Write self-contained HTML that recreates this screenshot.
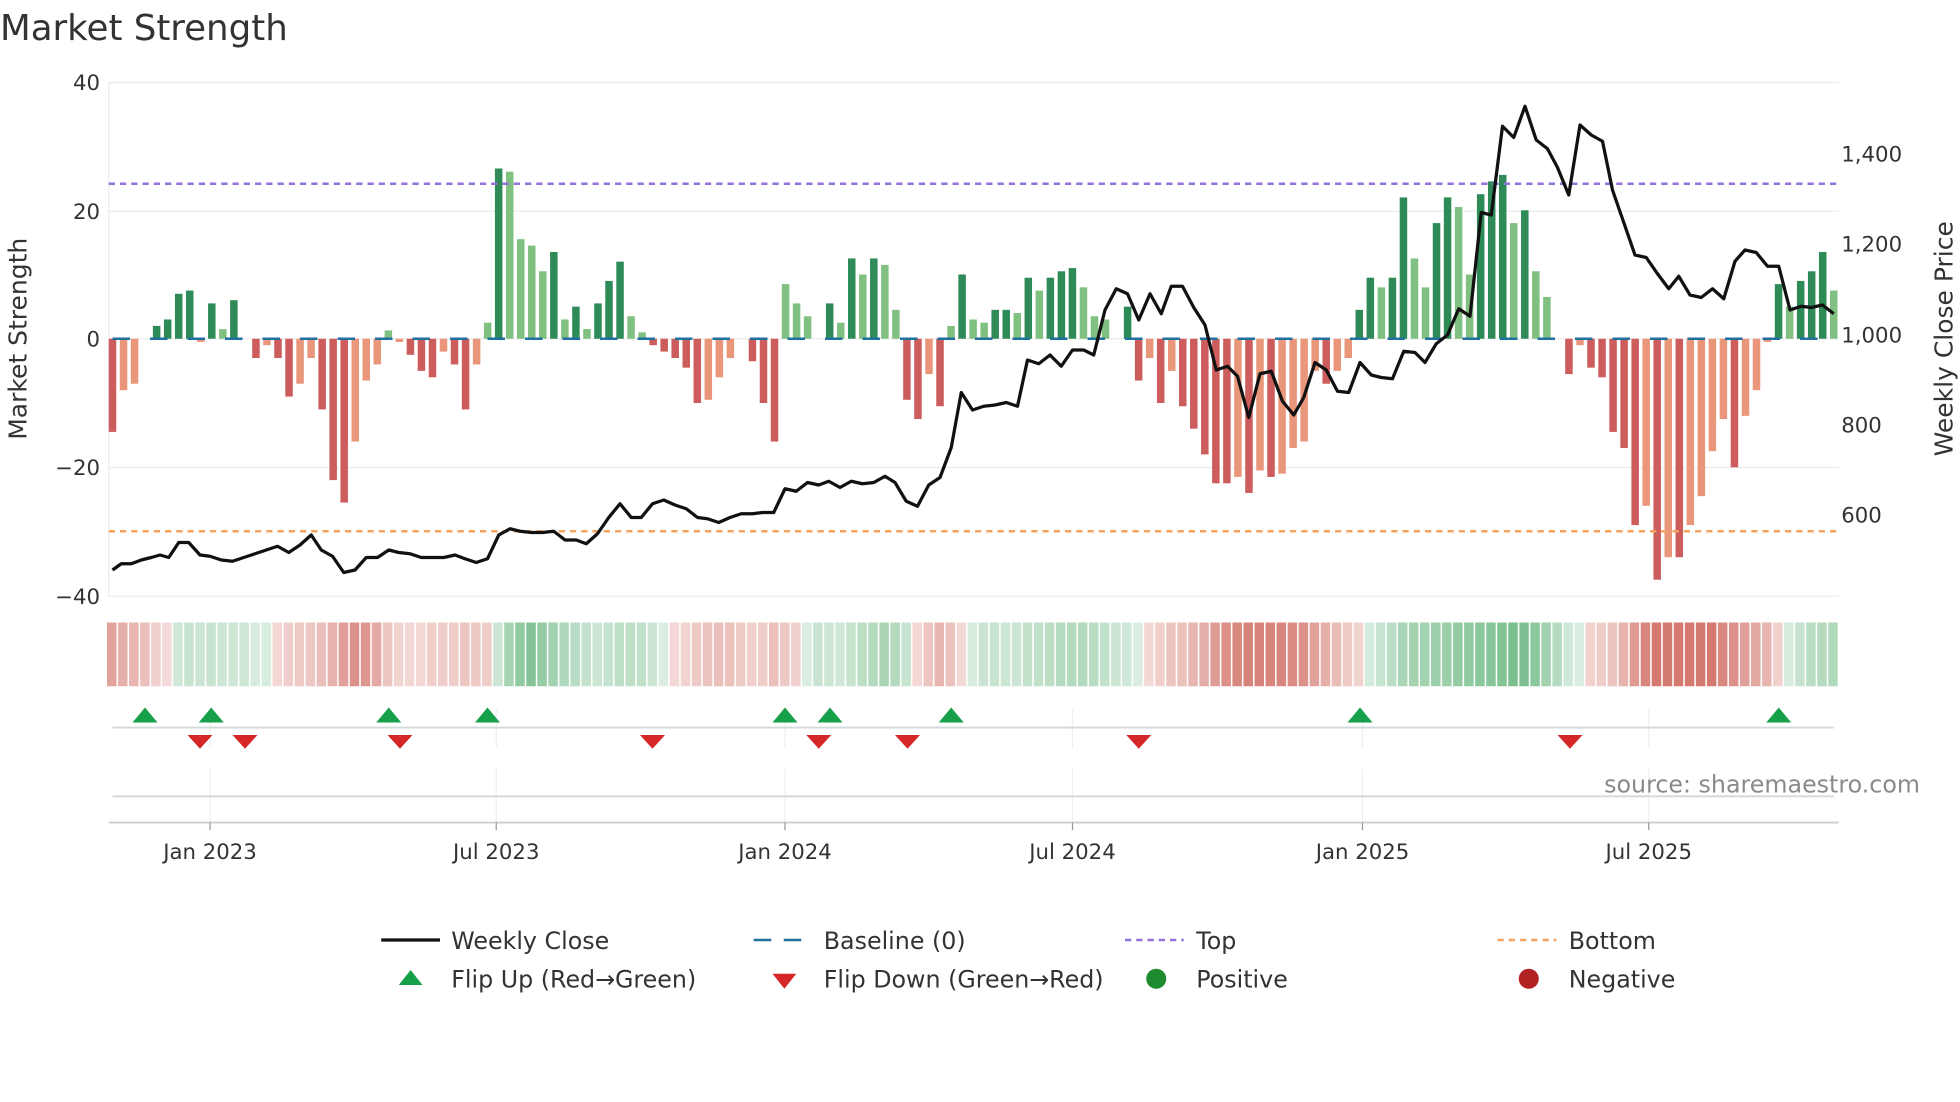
<!DOCTYPE html>
<html><head><meta charset="utf-8"><style>
html,body{margin:0;padding:0;background:#fff;width:1960px;height:1102px;overflow:hidden}
svg{display:block;font-family:"DejaVu Sans","Liberation Sans",sans-serif}
</style></head><body>
<svg id="s" width="1960" height="1102" viewBox="0 0 1568 881.6" xmlns="http://www.w3.org/2000/svg">
<text x="0" y="32" font-size="28.5" fill="#333">Market Strength</text>
<g stroke="#ececec" stroke-width="1">
<line x1="87" y1="66" x2="1471" y2="66"/><line x1="87" y1="169" x2="1471" y2="169"/><line x1="87" y1="271" x2="1471" y2="271"/><line x1="87" y1="374" x2="1471" y2="374"/><line x1="87" y1="477" x2="1471" y2="477"/>
</g>
<line x1="87" y1="66" x2="87" y2="477" stroke="#ececec"/>
<g font-size="17" fill="#333" text-anchor="end">
<text x="80" y="72">40</text><text x="80" y="175">20</text><text x="80" y="277">0</text><text x="80" y="380">−20</text><text x="80" y="483">−40</text>
</g>
<g font-size="17" fill="#333">
<text x="1473" y="129">1,400</text><text x="1473" y="201">1,200</text><text x="1473" y="274">1,000</text><text x="1473" y="346">800</text><text x="1473" y="418">600</text>
</g>
<text transform="translate(21,271) rotate(-90)" font-size="20" fill="#333" text-anchor="middle">Market Strength</text>
<text transform="translate(1562,271) rotate(-90)" font-size="20" fill="#333" text-anchor="middle">Weekly Close Price</text>
<g id="bars"></g>
<line x1="87" y1="147" x2="1471" y2="147" stroke="#9370db" stroke-width="2" stroke-dasharray="5,4"/>
<line x1="87" y1="425" x2="1471" y2="425" stroke="#f4a460" stroke-width="2" stroke-dasharray="5,4"/>
<line x1="90" y1="271" x2="1468" y2="271" stroke="#1f6f9f" stroke-width="2" stroke-dasharray="14,16"/>
<polyline id="price" fill="none" stroke="#111" stroke-width="2.6" stroke-linejoin="round"/>
<g id="heat"></g>
<g stroke="#eceff2"><line x1="168" y1="567" x2="168" y2="598"/><line x1="397" y1="567" x2="397" y2="598"/><line x1="628" y1="567" x2="628" y2="598"/><line x1="858" y1="567" x2="858" y2="598"/><line x1="1090" y1="567" x2="1090" y2="598"/><line x1="1319" y1="567" x2="1319" y2="598"/>
<line x1="168" y1="615" x2="168" y2="658"/><line x1="397" y1="615" x2="397" y2="658"/><line x1="628" y1="615" x2="628" y2="658"/><line x1="858" y1="615" x2="858" y2="658"/><line x1="1090" y1="615" x2="1090" y2="658"/><line x1="1319" y1="615" x2="1319" y2="658"/></g>
<line x1="90" y1="582" x2="1467" y2="582" stroke="#d4d7db" stroke-width="1.5"/>
<line x1="90" y1="637" x2="1467" y2="637" stroke="#d4d7db" stroke-width="1.5"/>
<line x1="87" y1="658" x2="1471" y2="658" stroke="#cfcfcf" stroke-width="1.5"/>
<g stroke="#999"><line x1="168" y1="658" x2="168" y2="664"/><line x1="397" y1="658" x2="397" y2="664"/><line x1="628" y1="658" x2="628" y2="664"/><line x1="858" y1="658" x2="858" y2="664"/><line x1="1090" y1="658" x2="1090" y2="664"/><line x1="1319" y1="658" x2="1319" y2="664"/></g>
<g id="marks"></g>
<g font-size="17" fill="#333" text-anchor="middle">
<text x="168" y="687">Jan 2023</text><text x="397" y="687">Jul 2023</text><text x="628" y="687">Jan 2024</text><text x="858" y="687">Jul 2024</text><text x="1090" y="687">Jan 2025</text><text x="1319" y="687">Jul 2025</text>
</g>
<text x="1536" y="634" font-size="19" fill="#8a8a8a" text-anchor="end">source: sharemaestro.com</text>
<g font-size="19" fill="#333">
<line x1="305" y1="752" x2="352" y2="752" stroke="#111" stroke-width="2.6"/><text x="361" y="759">Weekly Close</text>
<line x1="603" y1="752" x2="650" y2="752" stroke="#1f6f9f" stroke-width="2" stroke-dasharray="14,10"/><text x="659" y="759">Baseline (0)</text>
<line x1="900" y1="752" x2="947" y2="752" stroke="#9370db" stroke-width="2" stroke-dasharray="5,4"/><text x="957" y="759">Top</text>
<line x1="1198" y1="752" x2="1245" y2="752" stroke="#f4a460" stroke-width="2" stroke-dasharray="5,4"/><text x="1255" y="759">Bottom</text>
<polygon points="319,788 338,788 328.5,776" fill="#16a04a"/><text x="361" y="790">Flip Up (Red→Green)</text>
<polygon points="618,779 637,779 627.5,791" fill="#d62728"/><text x="659" y="790">Flip Down (Green→Red)</text>
<circle cx="925" cy="783" r="8" fill="#1f8b2f"/><text x="957" y="790">Positive</text>
<circle cx="1223" cy="783" r="8" fill="#b22222"/><text x="1255" y="790">Negative</text>
</g>
</svg>
<script>
var v=[-14.5,-8,-7,0,2,3,7,7.5,-0.5,5.5,1.5,6,0,-3,-1,-3,-9,-7,-3,-11,-22,-25.5,-16,-6.5,-4,1.3,-0.5,-2.5,-5,-6,-2,-4,-11,-4,2.5,26.5,26,15.5,14.5,10.5,13.5,3,5,1.5,5.5,9,12,3.5,1,-1,-2,-3,-4.5,-10,-9.5,-6,-3,0,-3.5,-10,-16,8.5,5.5,3.5,0,5.5,2.5,12.5,10,12.5,11.5,4.5,-9.5,-12.5,-5.5,-10.5,2,10,3,2.5,4.5,4.5,4,9.5,7.5,9.5,10.5,11,8,3.5,3,0,5,-6.5,-3,-10,-5,-10.5,-14,-18,-22.5,-22.5,-21.5,-24,-20.5,-21.5,-21,-17,-16,-5,-7,-5,-3,4.5,9.5,8,9.5,22,12.5,8,18,22,20.5,10,22.5,24.5,25.5,18,20,10.5,6.5,0,-5.5,-1,-4.5,-6,-14.5,-17,-29,-26,-37.5,-34,-34,-29,-24.5,-17.5,-12.5,-20,-12,-8,-0.5,8.5,5,9,10.5,13.5,7.5];
var ns="http://www.w3.org/2000/svg",B=document.getElementById('bars'),H=document.getElementById('heat');
function el(p,t,a){var e=document.createElementNS(ns,t);for(var k in a)e.setAttribute(k,a[k]);p.appendChild(e);return e;}
var step=(1467-90)/(v.length-1);
for(var i=0;i<v.length;i++){var x=90+i*step,val=v[i],prev=i>0?v[i-1]:0;
 var a=0,n=0;for(var j=Math.max(0,i-3);j<=i;j++){a+=v[j];n++;}a/=n;
 var t=Math.min(1,Math.abs(a)/25);var op=0.2+0.6*t;
 el(H,'rect',{x:x-4.4,y:498,width:7.6,height:51,fill:a>=0?'#2e9a4e':'#c0392b','fill-opacity':op*0.85});
 var dark=Math.abs(val)>=Math.abs(prev);
 var c=val>=0?(dark?'#2e8b57':'#80c080'):(dark?'#cd5c5c':'#e9967a');
 var h=Math.abs(val)*5.14; if(h<0.5)continue;
 el(B,'rect',{x:x-3,y:val>=0?271-h:271,width:6,height:h,fill:c});
}
var P=[[90,456],[97,451],[105,451],[113,448],[121,446],[128,444],[135,446],[143,434],[151,434],[160,444],[168,445],[177,448],[186,449],[195,446],[204,443],[213,440],[222,437],[231,442],[240,436],[249,428],[257,440],[266,445],[275,458],[284,456],[293,446],[302,446],[311,440],[319,442],[328,443],[337,446],[346,446],[355,446],[364,444],[372,447],[381,450],[390,447],[399,428],[408,423],[416,425],[425,426],[434,426],[443,425],[452,432],[461,432],[469,435],[478,427],[487,414],[496,403],[505,414],[513,414],[522,403],[531,400],[540,404],[549,407],[558,414],[566,415],[575,418],[584,414],[593,411],[602,411],[610,410],[619,410],[628,391],[637,393],[646,386],[655,388],[663,385],[672,390],[681,385],[690,387],[699,386],[708,381],[716,386],[725,401],[734,405],[743,388],[752,382],[761,358],[769,314],[778,328],[787,325],[796,324],[805,322],[814,325],[822,288],[831,291],[840,284],[849,293],[858,280],[867,280],[875,284],[884,248],[893,231],[902,235],[911,256],[920,235],[929,251],[937,229],[946,229],[955,246],[964,260],[973,296],[982,293],[990,301],[999,334],[1008,299],[1017,297],[1026,321],[1035,332],[1043,318],[1052,290],[1061,296],[1070,313],[1079,314],[1088,290],[1097,300],[1105,302],[1114,303],[1123,281],[1132,282],[1140,290],[1149,275],[1158,268],[1167,247],[1176,253],[1185,170],[1193,172],[1202,101],[1211,110],[1220,85],[1229,112],[1238,119],[1246,134],[1255,156],[1264,100],[1273,108],[1282,113],[1290,152],[1299,178],[1308,204],[1317,206],[1326,219],[1335,231],[1343,221],[1352,236],[1361,238],[1370,231],[1379,239],[1388,209],[1396,200],[1405,202],[1414,213],[1423,213],[1432,248],[1441,245],[1449,246],[1458,244],[1467,251]];
document.getElementById('price').setAttribute('points',P.map(function(p){return p.join(',')}).join(' '));
var M=document.getElementById('marks');
[116,169,311,390,628,664,761,1088,1423].forEach(function(x){el(M,'polygon',{points:(x-10)+',578 '+(x+10)+',578 '+x+',566',fill:'#16a04a'});});
[160,196,320,522,655,726,911,1256].forEach(function(x){el(M,'polygon',{points:(x-10)+',588 '+(x+10)+',588 '+x+',599',fill:'#d62728'});});
</script>
</body></html>
